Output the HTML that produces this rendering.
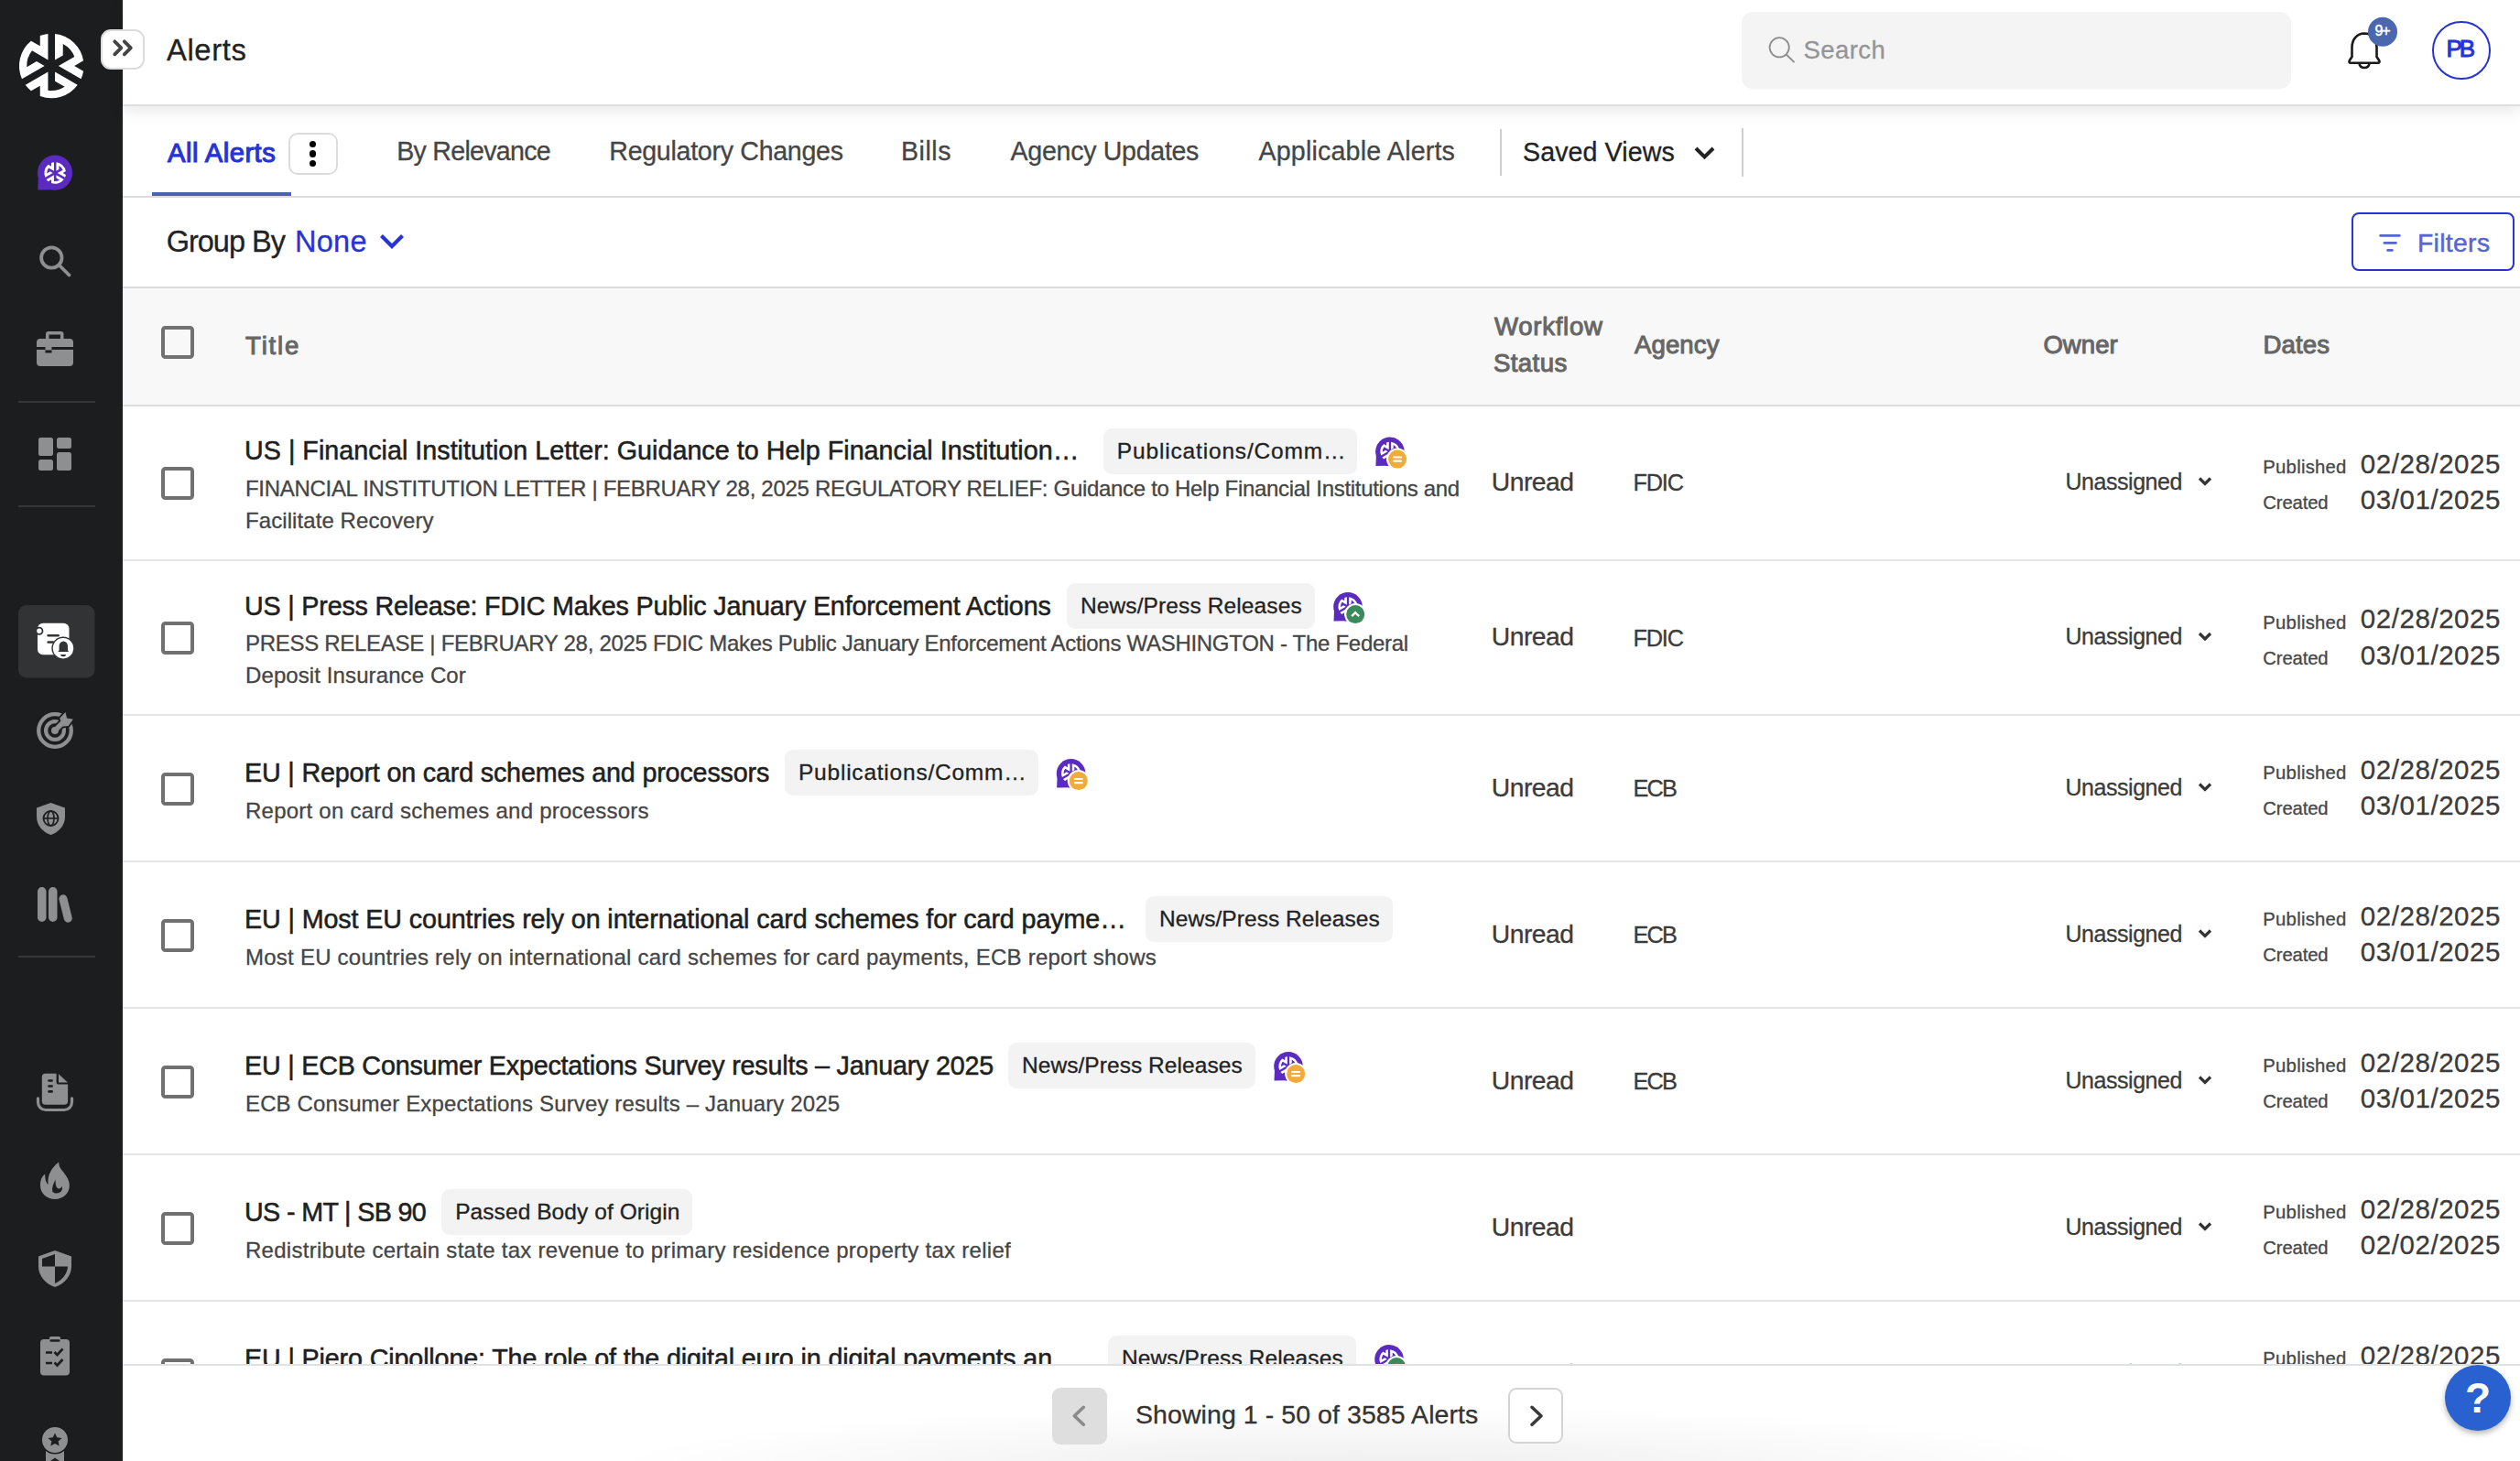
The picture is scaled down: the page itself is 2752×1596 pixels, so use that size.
<!DOCTYPE html>
<html><head><meta charset="utf-8"><style>
html,body{margin:0;padding:0;width:2752px;height:1596px;overflow:hidden;background:#fff;font-family:"Liberation Sans", sans-serif;}
#sb{position:absolute;left:0;top:0;width:134px;height:1596px;background:#1c1d1f;}
.tag{position:absolute;height:50px;background:#f3f3f3;border-radius:9px;}
.cb{position:absolute;width:28px;height:28px;border:4px solid #717171;border-radius:4.5px;}
.rowline{position:absolute;left:134px;width:2618px;height:2px;background:#e3e5e8;}
</style></head><body>
<div style="position:absolute;left:134px;top:0;width:2618px;height:114px;background:#fff;box-shadow:0 5px 16px rgba(0,0,0,0.095);border-bottom:2px solid #dedede;box-sizing:border-box;height:116px;z-index:1"></div>
<div style="position:absolute;left:134px;top:313px;width:2618px;height:129px;background:#f8f8f8;border-top:2px solid #dcdcdc;border-bottom:2px solid #dcdcdc;box-sizing:border-box;height:131px"></div>
<div style="position:absolute;left:134px;top:214px;width:2618px;height:2px;background:#dcdcdc"></div>
<div style="position:absolute;left:166px;top:210px;width:152px;height:4px;background:#4a62b0"></div>
<div style="position:absolute;left:1638px;top:141px;width:2px;height:51px;background:#cfcfcf"></div>
<div style="position:absolute;left:1902px;top:140px;width:2px;height:53px;background:#cfcfcf"></div>
<div style="position:absolute;left:314.6px;top:144.8px;width:54.5px;height:46.5px;border:2px solid #dcdcdc;border-radius:10px;box-sizing:border-box"></div>
<div style="position:absolute;left:338.2px;top:153.7px;width:7.2px;height:7.2px;border-radius:50%;background:#000"></div>
<div style="position:absolute;left:338.2px;top:164.4px;width:7.2px;height:7.2px;border-radius:50%;background:#000"></div>
<div style="position:absolute;left:338.2px;top:174.8px;width:7.2px;height:7.2px;border-radius:50%;background:#000"></div>
<div style="position:absolute;left:1902px;top:13px;width:600px;height:84px;background:#f4f4f4;border-radius:12px;z-index:2"></div>
<div style="position:absolute;left:2568px;top:232px;width:177.6px;height:63.6px;border:2px solid #2633d6;border-radius:8px;box-sizing:border-box"></div>
<div style="position:absolute;left:2656.3px;top:23.2px;width:63.4px;height:63.4px;border:2.2px solid #2633d6;border-radius:50%;box-sizing:border-box;z-index:2"></div>
<div style="position:absolute;left:134px;top:1490px;width:2618px;height:106px;background:radial-gradient(ellipse 820px 70px at 1346px 112px, rgba(0,0,0,0.065), rgba(0,0,0,0) 100%), #fff;border-top:2px solid #dfe1e4;box-sizing:border-box;z-index:3"></div>
<div style="position:absolute;left:1149px;top:1516px;width:59.6px;height:61.5px;background:#dedede;border-radius:9px;z-index:4"></div>
<div style="position:absolute;left:1647.4px;top:1516.3px;width:59.4px;height:61px;border:2px solid #d4d4d4;background:#fff;border-radius:9px;box-sizing:border-box;z-index:4"></div>
<div style="position:absolute;left:2670px;top:1490.6px;width:72px;height:72px;border-radius:50%;background:#2962d0;box-shadow:0 3px 6px rgba(0,0,0,0.3);z-index:5"></div>
<div class="tag" style="left:1204.8px;top:467.5px;width:277.1px"></div><div class="cb" style="left:176px;top:509.5px"></div><div class="rowline" style="top:611.0px"></div><div class="tag" style="left:1165.0px;top:637.0px;width:271.0px"></div><div class="cb" style="left:176px;top:679.0px"></div><div class="rowline" style="top:780.0px"></div><div class="tag" style="left:857.0px;top:819.0px;width:276.6px"></div><div class="cb" style="left:176px;top:843.5px"></div><div class="rowline" style="top:940.0px"></div><div class="tag" style="left:1251.0px;top:979.0px;width:270.0px"></div><div class="cb" style="left:176px;top:1003.5px"></div><div class="rowline" style="top:1100.0px"></div><div class="tag" style="left:1101.0px;top:1139.0px;width:270.0px"></div><div class="cb" style="left:176px;top:1163.5px"></div><div class="rowline" style="top:1260.0px"></div><div class="tag" style="left:482.2px;top:1299.0px;width:273.7px"></div><div class="cb" style="left:176px;top:1323.5px"></div><div class="rowline" style="top:1420.0px"></div><div class="tag" style="left:1210.0px;top:1459.0px;width:271.0px"></div><div class="cb" style="left:176px;top:1483.5px"></div><div class="rowline" style="top:1580.0px"></div>
<div class="cb" style="left:176px;top:356px"></div>
<div id="sb">
<svg width="134" height="1596" style="position:absolute;left:0;top:0">
<g transform="translate(56.25 72) scale(1.0)" fill="#fff"><path d="M-32.29 14.26 L-7.60 0.00 L-16.30 -5.02 L-26.98 1.14 A27.00 27.00 0 0 1 -21.25 -16.66 L-3.80 -6.58 L-3.80 -35.09 A35.30 35.30 0 0 0 -12.50 -33.01 L-12.50 -21.65 L-22.34 -27.33 A35.30 35.30 0 0 0 -32.29 14.26 Z"/><path d="M-32.29 14.26 L-7.60 0.00 L-16.30 -5.02 L-26.98 1.14 A27.00 27.00 0 0 1 -21.25 -16.66 L-3.80 -6.58 L-3.80 -35.09 A35.30 35.30 0 0 0 -12.50 -33.01 L-12.50 -21.65 L-22.34 -27.33 A35.30 35.30 0 0 0 -32.29 14.26 Z" transform="rotate(120)"/><path d="M-32.29 14.26 L-7.60 0.00 L-16.30 -5.02 L-26.98 1.14 A27.00 27.00 0 0 1 -21.25 -16.66 L-3.80 -6.58 L-3.80 -35.09 A35.30 35.30 0 0 0 -12.50 -33.01 L-12.50 -21.65 L-22.34 -27.33 A35.30 35.30 0 0 0 -32.29 14.26 Z" transform="rotate(240)"/></g>
<circle cx="60" cy="188.7" r="19.1" fill="#5b2bc0"/><path d="M41.86 193.47 L41.28 207.61 L58.09 207.23 Z" fill="#5b2bc0"/>
<g transform="translate(60.2 189) scale(0.335)" fill="#fff"><path d="M-32.29 14.26 L-7.60 0.00 L-16.30 -5.02 L-26.98 1.14 A27.00 27.00 0 0 1 -21.25 -16.66 L-3.80 -6.58 L-3.80 -35.09 A35.30 35.30 0 0 0 -12.50 -33.01 L-12.50 -21.65 L-22.34 -27.33 A35.30 35.30 0 0 0 -32.29 14.26 Z"/><path d="M-32.29 14.26 L-7.60 0.00 L-16.30 -5.02 L-26.98 1.14 A27.00 27.00 0 0 1 -21.25 -16.66 L-3.80 -6.58 L-3.80 -35.09 A35.30 35.30 0 0 0 -12.50 -33.01 L-12.50 -21.65 L-22.34 -27.33 A35.30 35.30 0 0 0 -32.29 14.26 Z" transform="rotate(120)"/><path d="M-32.29 14.26 L-7.60 0.00 L-16.30 -5.02 L-26.98 1.14 A27.00 27.00 0 0 1 -21.25 -16.66 L-3.80 -6.58 L-3.80 -35.09 A35.30 35.30 0 0 0 -12.50 -33.01 L-12.50 -21.65 L-22.34 -27.33 A35.30 35.30 0 0 0 -32.29 14.26 Z" transform="rotate(240)"/></g>
<!-- search -->
<circle cx="56.3" cy="281.5" r="11.2" stroke="#8e8f91" stroke-width="3.8" fill="none"/>
<path d="M64.5 289.5 L75.5 300.5" stroke="#8e8f91" stroke-width="3.8" stroke-linecap="round"/>
<!-- briefcase -->
<path d="M50 370 V365 a3 3 0 0 1 3 -3 h13.5 a3 3 0 0 1 3 3 V370 Z M53.5 365.5 h12.5 v4.5 h-12.5 Z" fill="#8e8f91" fill-rule="evenodd"/>
<path d="M44 370 h32 a4 4 0 0 1 4 4 v5 h-23.5 v3.5 h-7 v-3.5 H40 v-5 a4 4 0 0 1 4 -4 Z" fill="#8e8f91"/>
<path d="M40 382 h9.5 v3.5 h7 v-3.5 H80 v14 a4 4 0 0 1 -4 4 H44 a4 4 0 0 1 -4 -4 Z" fill="#8e8f91"/>
<rect x="20" y="438" width="84" height="2" fill="#34363a"/>
<!-- dashboard -->
<rect x="42" y="478" width="16" height="20" rx="2.5" fill="#8e8f91"/>
<rect x="62" y="478" width="16" height="12" rx="2.5" fill="#8e8f91"/>
<rect x="42" y="502" width="16" height="12" rx="2.5" fill="#8e8f91"/>
<rect x="62" y="494" width="16" height="20" rx="2.5" fill="#8e8f91"/>
<rect x="20" y="552" width="84" height="2" fill="#34363a"/>
<!-- active alerts -->
<rect x="20" y="661" width="83.5" height="79.5" rx="9" fill="#323335"/>
<rect x="41" y="680.7" width="34.5" height="34.5" rx="6" fill="#fff"/>
<circle cx="42.9" cy="689.3" r="3.6" fill="#fff" stroke="#323335" stroke-width="1.8"/>
<rect x="51.4" y="692.9" width="13.5" height="2.5" rx="1.2" fill="#323335"/>
<rect x="51.4" y="700.3" width="8" height="2.5" rx="1.2" fill="#323335"/>
<circle cx="69" cy="708.2" r="12.6" fill="#323335"/>
<circle cx="69" cy="708.2" r="11.2" fill="#fff"/>
<path d="M63.3 712 L64.6 710.2 V705.6 a4.7 5.2 0 0 1 9.4 0 V710.2 L75.1 712 Z" fill="#323335"/>
<path d="M66.2 715 h5.8 a2.9 2.2 0 0 1 -5.8 0 Z" fill="#323335"/>
<!-- target -->
<circle cx="60" cy="798" r="17.8" stroke="#8e8f91" stroke-width="4.3" fill="none"/>
<circle cx="60" cy="798" r="9.9" stroke="#8e8f91" stroke-width="4.2" fill="none"/>
<path d="M60 798 L72 786" stroke="#1c1d1f" stroke-width="9.5" stroke-linecap="round"/>
<path d="M65.3 784.4 L71.5 778 L73 784.4 L79.9 785.8 L74.6 793 L68.2 793.4 Z" fill="#1c1d1f" stroke="#1c1d1f" stroke-width="3.5" stroke-linejoin="round"/>
<path d="M60 798 L70 788" stroke="#8e8f91" stroke-width="5.4" stroke-linecap="round"/>
<path d="M65.3 784.4 L71.5 778 L73 784.4 L79.9 785.8 L74.6 793 L68.2 793.4 Z" fill="#8e8f91"/>
<circle cx="60" cy="798" r="4" fill="#8e8f91"/>
<!-- shield globe -->
<path d="M55.5 877 L71 882.5 v9.5 c0 9.5 -6.5 17 -15.5 20 c-9 -3 -15.5 -10.5 -15.5 -20 v-9.5 Z" fill="#8e8f91"/>
<circle cx="55.5" cy="894" r="8" stroke="#1c1d1f" stroke-width="1.8" fill="none"/>
<ellipse cx="55.5" cy="894" rx="3.5" ry="8" stroke="#1c1d1f" stroke-width="1.6" fill="none"/>
<path d="M47.5 894 h16" stroke="#1c1d1f" stroke-width="1.6"/>
<!-- books -->
<rect x="41" y="969" width="9.5" height="38" rx="4.75" fill="#8e8f91"/>
<rect x="53" y="969" width="9.5" height="38" rx="4.75" fill="#8e8f91"/>
<rect x="67" y="977" width="9" height="31" rx="4.5" fill="#8e8f91" transform="rotate(-14 71.5 992)"/>
<rect x="20" y="1044" width="84" height="2" fill="#34363a"/>
<!-- doc tray -->
<path d="M49.5 1172.7 H61.6 V1182 a2.6 2.6 0 0 0 2.6 2.6 H74.1 V1203.1 a3.7 3.7 0 0 1 -3.7 3.7 H49.5 a3.7 3.7 0 0 1 -3.7 -3.7 V1176.4 a3.7 3.7 0 0 1 3.7 -3.7 Z" fill="#8e8f91"/>
<path d="M64 1173.3 L74 1182.6 H64 Z" fill="#8e8f91"/>
<rect x="52.2" y="1179.2" width="5.7" height="2.6" rx="1.3" fill="#1c1d1f"/><rect x="52.2" y="1185.2" width="5.7" height="2.6" rx="1.3" fill="#1c1d1f"/><rect x="52.2" y="1191.1" width="5.7" height="2.6" rx="1.3" fill="#1c1d1f"/>
<path d="M41.5 1199.8 v4.2 a8.5 8.5 0 0 0 8.5 8.5 h20 a8.5 8.5 0 0 0 8.5 -8.5 v-4.2" stroke="#8e8f91" stroke-width="3.2" fill="none" stroke-linecap="round"/>
<!-- flame -->
<path d="M64.3 1269.2 C63 1278 75.9 1283 75.9 1295 C75.9 1303.5 68.8 1310 60 1310 C51.2 1310 44 1303.5 44 1295 C44 1289 46 1285 49.2 1282.6 C49 1287 50 1292 52.6 1294.2 C51.5 1284 56 1276 64.3 1269.2 Z" fill="#8e8f91"/>
<path d="M60.8 1288.4 C58 1293 56.5 1297.5 57.3 1301.7 C59.5 1303.8 62.5 1304 65 1302.8 C67.8 1301.2 68.6 1298.3 67.6 1296 C66.2 1298.8 63.6 1299.3 62.1 1297.3 C60.6 1295 60.4 1291.5 60.8 1288.4 Z" fill="#1c1d1f"/>
<!-- shield half -->
<path d="M60 1366 L78 1372.5 v11 c0 10 -7.5 19 -18 22.5 c-10.5 -3.5 -18 -12.5 -18 -22.5 v-11 Z" fill="#8e8f91"/>
<path d="M60 1370 L46 1375 v8.5 h14 Z" fill="#1c1d1f"/>
<path d="M60 1383.5 h14 c-0.5 8 -6 15 -14 18.5 Z" fill="#1c1d1f"/>
<path d="M60 1370 L46 1375 v8.5 c0 0.3 0 0.5 0 0.8" fill="none"/>
<!-- clipboard -->
<path d="M48 1463 h6 v-1.5 a1.5 1.5 0 0 1 1.5 -1.5 h9 a1.5 1.5 0 0 1 1.5 1.5 v1.5 h6 a4 4 0 0 1 4 4 v31.6 a4 4 0 0 1 -4 4 h-24 a4 4 0 0 1 -4 -4 v-31.6 a4 4 0 0 1 4 -4 Z" fill="#8e8f91"/>
<rect x="54.5" y="1463.2" width="11" height="2.6" rx="1" fill="#1c1d1f"/>
<path d="M50 1477.5 h7 M50 1489 h7" stroke="#1c1d1f" stroke-width="2.6"/>
<path d="M59.5 1477 l3 3 l6 -6.5 M59.5 1488.5 l3 3 l6 -6.5" stroke="#1c1d1f" stroke-width="2.6" fill="none"/>
<!-- award -->
<path d="M50 1584 h20 v12 h-20 Z" fill="#8e8f91"/>
<path d="M55 1596 L60 1592.5 L65 1596 Z" fill="#1c1d1f"/>
<circle cx="60" cy="1573" r="14.8" fill="#8e8f91" stroke="#1c1d1f" stroke-width="1.6"/>
<path d="M60 1565.5 l2.3 4.8 l5.2 0.6 l-3.9 3.6 l1.1 5.1 l-4.7 -2.6 l-4.7 2.6 l1.1 -5.1 l-3.9 -3.6 l5.2 -0.6 Z" fill="#1c1d1f"/>
</svg></div>
<div style="position:absolute;left:110px;top:32px;width:48px;height:44px;background:#fff;border:2px solid #dcdcdc;border-radius:11px;box-sizing:border-box;z-index:6"></div>
<svg width="2752" height="1596" style="position:absolute;left:0;top:0;z-index:7;pointer-events:none">
<path d="M125.3 45.3 L132.3 52.3 L125.3 59.3 M135.8 45.3 L142.8 52.3 L135.8 59.3" stroke="#444" stroke-width="3.8" fill="none" stroke-linecap="round" stroke-linejoin="round"/>
<circle cx="1943.2" cy="51.8" r="10.6" stroke="#8d8d8d" stroke-width="1.8" fill="none"/>
<path d="M1951 59.8 L1959 67.6" stroke="#8d8d8d" stroke-width="1.9" stroke-linecap="round"/>
<path d="M2582 36.5 c-8 0 -13.5 6.5 -13.5 15.5 v10 l-2.8 4.3 c-0.7 1.2 0.1 2.4 1.4 2.4 h29.8 c1.3 0 2.1 -1.2 1.4 -2.4 l-2.8 -4.3 v-10 c0 -9 -5.5 -15.5 -13.5 -15.5 Z" stroke="#1a1a1a" stroke-width="2.6" fill="#fff"/>
<path d="M2576.5 69.5 a5.6 5.6 0 0 0 11 0" stroke="#1a1a1a" stroke-width="2.6" fill="none"/>
<circle cx="2602" cy="34.8" r="16" fill="#4a67b0" stroke="#fff" stroke-width="0"/>
<path d="M416.5 257.5 L428 269 L439.5 257.5" stroke="#2633d6" stroke-width="4.2" fill="none"/>
<path d="M1852 162 L1861.5 171.5 L1871 162" stroke="#222" stroke-width="4" fill="none"/>
<path d="M2599.6 257.4 h20.8 M2603.9 265.4 h12.6 M2607.6 273.4 h4.8" stroke="#5566d6" stroke-width="2.8" stroke-linecap="round"/>
<path d="M1183.3 1537.3 L1173.3 1546.8 L1183.3 1556.2" stroke="#8a8a8a" stroke-width="3.6" fill="none" stroke-linecap="round" stroke-linejoin="round"/>
<path d="M1673 1537.3 L1683 1546.8 L1673 1556.2" stroke="#3a3a3a" stroke-width="3.6" fill="none" stroke-linecap="round" stroke-linejoin="round"/>
</svg>
<svg width="2752" height="1596" style="position:absolute;left:0;top:0;z-index:1">
<circle cx="1517.9" cy="493.3" r="15.8" fill="#5b2bc0"/><path d="M1502.89 497.25 L1502.42 508.94 L1516.32 508.63 Z" fill="#5b2bc0"/><g transform="translate(1517.9 493.3) scale(0.3)" fill="#fff"><path d="M-32.29 14.26 L-7.60 0.00 L-16.30 -5.02 L-26.98 1.14 A27.00 27.00 0 0 1 -21.25 -16.66 L-3.80 -6.58 L-3.80 -35.09 A35.30 35.30 0 0 0 -12.50 -33.01 L-12.50 -21.65 L-22.34 -27.33 A35.30 35.30 0 0 0 -32.29 14.26 Z"/><path d="M-32.29 14.26 L-7.60 0.00 L-16.30 -5.02 L-26.98 1.14 A27.00 27.00 0 0 1 -21.25 -16.66 L-3.80 -6.58 L-3.80 -35.09 A35.30 35.30 0 0 0 -12.50 -33.01 L-12.50 -21.65 L-22.34 -27.33 A35.30 35.30 0 0 0 -32.29 14.26 Z" transform="rotate(120)"/><path d="M-32.29 14.26 L-7.60 0.00 L-16.30 -5.02 L-26.98 1.14 A27.00 27.00 0 0 1 -21.25 -16.66 L-3.80 -6.58 L-3.80 -35.09 A35.30 35.30 0 0 0 -12.50 -33.01 L-12.50 -21.65 L-22.34 -27.33 A35.30 35.30 0 0 0 -32.29 14.26 Z" transform="rotate(240)"/></g><circle cx="1526.1000000000001" cy="501.6" r="12" fill="#fff"/><circle cx="1526.1000000000001" cy="501.6" r="10" fill="#f0ab3a"/><rect x="1521.1000000000001" y="498.40000000000003" width="10" height="2.2" rx="1" fill="#fff"/><rect x="1521.1000000000001" y="502.6" width="10" height="2.2" rx="1" fill="#fff"/><path d="M2402 522.5 L2408 528.5 L2414 522.5" stroke="#333" stroke-width="3.2" fill="none"/><circle cx="1472" cy="662.8" r="15.8" fill="#5b2bc0"/><path d="M1456.99 666.75 L1456.52 678.44 L1470.42 678.13 Z" fill="#5b2bc0"/><g transform="translate(1472 662.8) scale(0.3)" fill="#fff"><path d="M-32.29 14.26 L-7.60 0.00 L-16.30 -5.02 L-26.98 1.14 A27.00 27.00 0 0 1 -21.25 -16.66 L-3.80 -6.58 L-3.80 -35.09 A35.30 35.30 0 0 0 -12.50 -33.01 L-12.50 -21.65 L-22.34 -27.33 A35.30 35.30 0 0 0 -32.29 14.26 Z"/><path d="M-32.29 14.26 L-7.60 0.00 L-16.30 -5.02 L-26.98 1.14 A27.00 27.00 0 0 1 -21.25 -16.66 L-3.80 -6.58 L-3.80 -35.09 A35.30 35.30 0 0 0 -12.50 -33.01 L-12.50 -21.65 L-22.34 -27.33 A35.30 35.30 0 0 0 -32.29 14.26 Z" transform="rotate(120)"/><path d="M-32.29 14.26 L-7.60 0.00 L-16.30 -5.02 L-26.98 1.14 A27.00 27.00 0 0 1 -21.25 -16.66 L-3.80 -6.58 L-3.80 -35.09 A35.30 35.30 0 0 0 -12.50 -33.01 L-12.50 -21.65 L-22.34 -27.33 A35.30 35.30 0 0 0 -32.29 14.26 Z" transform="rotate(240)"/></g><circle cx="1480.2" cy="671.0999999999999" r="12" fill="#fff"/><circle cx="1480.2" cy="671.0999999999999" r="10" fill="#3b8a5c"/><path d="M1476.2 673.0999999999999 L1480.2 669.0999999999999 L1484.2 673.0999999999999" stroke="#fff" stroke-width="2.2" fill="none"/><path d="M2402 692.0 L2408 698.0 L2414 692.0" stroke="#333" stroke-width="3.2" fill="none"/><circle cx="1169.6" cy="844.8" r="15.8" fill="#5b2bc0"/><path d="M1154.59 848.75 L1154.12 860.44 L1168.02 860.13 Z" fill="#5b2bc0"/><g transform="translate(1169.6 844.8) scale(0.3)" fill="#fff"><path d="M-32.29 14.26 L-7.60 0.00 L-16.30 -5.02 L-26.98 1.14 A27.00 27.00 0 0 1 -21.25 -16.66 L-3.80 -6.58 L-3.80 -35.09 A35.30 35.30 0 0 0 -12.50 -33.01 L-12.50 -21.65 L-22.34 -27.33 A35.30 35.30 0 0 0 -32.29 14.26 Z"/><path d="M-32.29 14.26 L-7.60 0.00 L-16.30 -5.02 L-26.98 1.14 A27.00 27.00 0 0 1 -21.25 -16.66 L-3.80 -6.58 L-3.80 -35.09 A35.30 35.30 0 0 0 -12.50 -33.01 L-12.50 -21.65 L-22.34 -27.33 A35.30 35.30 0 0 0 -32.29 14.26 Z" transform="rotate(120)"/><path d="M-32.29 14.26 L-7.60 0.00 L-16.30 -5.02 L-26.98 1.14 A27.00 27.00 0 0 1 -21.25 -16.66 L-3.80 -6.58 L-3.80 -35.09 A35.30 35.30 0 0 0 -12.50 -33.01 L-12.50 -21.65 L-22.34 -27.33 A35.30 35.30 0 0 0 -32.29 14.26 Z" transform="rotate(240)"/></g><circle cx="1177.8" cy="853.0999999999999" r="12" fill="#fff"/><circle cx="1177.8" cy="853.0999999999999" r="10" fill="#f0ab3a"/><rect x="1172.8" y="849.8999999999999" width="10" height="2.2" rx="1" fill="#fff"/><rect x="1172.8" y="854.0999999999999" width="10" height="2.2" rx="1" fill="#fff"/><path d="M2402 856.5 L2408 862.5 L2414 856.5" stroke="#333" stroke-width="3.2" fill="none"/><path d="M2402 1016.5 L2408 1022.5 L2414 1016.5" stroke="#333" stroke-width="3.2" fill="none"/><circle cx="1407" cy="1164.8" r="15.8" fill="#5b2bc0"/><path d="M1391.99 1168.75 L1391.52 1180.44 L1405.42 1180.13 Z" fill="#5b2bc0"/><g transform="translate(1407 1164.8) scale(0.3)" fill="#fff"><path d="M-32.29 14.26 L-7.60 0.00 L-16.30 -5.02 L-26.98 1.14 A27.00 27.00 0 0 1 -21.25 -16.66 L-3.80 -6.58 L-3.80 -35.09 A35.30 35.30 0 0 0 -12.50 -33.01 L-12.50 -21.65 L-22.34 -27.33 A35.30 35.30 0 0 0 -32.29 14.26 Z"/><path d="M-32.29 14.26 L-7.60 0.00 L-16.30 -5.02 L-26.98 1.14 A27.00 27.00 0 0 1 -21.25 -16.66 L-3.80 -6.58 L-3.80 -35.09 A35.30 35.30 0 0 0 -12.50 -33.01 L-12.50 -21.65 L-22.34 -27.33 A35.30 35.30 0 0 0 -32.29 14.26 Z" transform="rotate(120)"/><path d="M-32.29 14.26 L-7.60 0.00 L-16.30 -5.02 L-26.98 1.14 A27.00 27.00 0 0 1 -21.25 -16.66 L-3.80 -6.58 L-3.80 -35.09 A35.30 35.30 0 0 0 -12.50 -33.01 L-12.50 -21.65 L-22.34 -27.33 A35.30 35.30 0 0 0 -32.29 14.26 Z" transform="rotate(240)"/></g><circle cx="1415.2" cy="1173.1" r="12" fill="#fff"/><circle cx="1415.2" cy="1173.1" r="10" fill="#f0ab3a"/><rect x="1410.2" y="1169.8999999999999" width="10" height="2.2" rx="1" fill="#fff"/><rect x="1410.2" y="1174.1" width="10" height="2.2" rx="1" fill="#fff"/><path d="M2402 1176.5 L2408 1182.5 L2414 1176.5" stroke="#333" stroke-width="3.2" fill="none"/><path d="M2402 1336.5 L2408 1342.5 L2414 1336.5" stroke="#333" stroke-width="3.2" fill="none"/><circle cx="1517" cy="1484.8" r="15.8" fill="#5b2bc0"/><path d="M1501.99 1488.75 L1501.52 1500.44 L1515.42 1500.13 Z" fill="#5b2bc0"/><g transform="translate(1517 1484.8) scale(0.3)" fill="#fff"><path d="M-32.29 14.26 L-7.60 0.00 L-16.30 -5.02 L-26.98 1.14 A27.00 27.00 0 0 1 -21.25 -16.66 L-3.80 -6.58 L-3.80 -35.09 A35.30 35.30 0 0 0 -12.50 -33.01 L-12.50 -21.65 L-22.34 -27.33 A35.30 35.30 0 0 0 -32.29 14.26 Z"/><path d="M-32.29 14.26 L-7.60 0.00 L-16.30 -5.02 L-26.98 1.14 A27.00 27.00 0 0 1 -21.25 -16.66 L-3.80 -6.58 L-3.80 -35.09 A35.30 35.30 0 0 0 -12.50 -33.01 L-12.50 -21.65 L-22.34 -27.33 A35.30 35.30 0 0 0 -32.29 14.26 Z" transform="rotate(120)"/><path d="M-32.29 14.26 L-7.60 0.00 L-16.30 -5.02 L-26.98 1.14 A27.00 27.00 0 0 1 -21.25 -16.66 L-3.80 -6.58 L-3.80 -35.09 A35.30 35.30 0 0 0 -12.50 -33.01 L-12.50 -21.65 L-22.34 -27.33 A35.30 35.30 0 0 0 -32.29 14.26 Z" transform="rotate(240)"/></g><circle cx="1525.2" cy="1493.1" r="12" fill="#fff"/><circle cx="1525.2" cy="1493.1" r="10" fill="#3b8a5c"/><path d="M1521.2 1495.1 L1525.2 1491.1 L1529.2 1495.1" stroke="#fff" stroke-width="2.2" fill="none"/><path d="M2402 1496.5 L2408 1502.5 L2414 1496.5" stroke="#333" stroke-width="3.2" fill="none"/>
</svg>
<div style="position:absolute;left:0;top:0;width:2752px;height:1596px;z-index:2"><span style="position:absolute;left:267.00px;top:476.02px;font-size:28.7px;line-height:32.063px;color:#1f1f1f;white-space:nowrap;letter-spacing:0.019px;-webkit-text-stroke:0.55px #1f1f1f;">US | Financial Institution Letter: Guidance to Help Financial Institution…</span><span style="position:absolute;left:268.00px;top:520.77px;font-size:24px;line-height:26.812px;color:#454545;white-space:nowrap;letter-spacing:-0.300px;-webkit-text-stroke:0.3px #454545;">FINANCIAL INSTITUTION LETTER | FEBRUARY 28, 2025 REGULATORY RELIEF: Guidance to Help Financial Institutions and</span><span style="position:absolute;left:268.00px;top:555.77px;font-size:24px;line-height:26.812px;color:#454545;white-space:nowrap;letter-spacing:0.083px;-webkit-text-stroke:0.3px #454545;">Facilitate Recovery</span><span style="position:absolute;left:1219.80px;top:478.52px;font-size:24.5px;line-height:27.371px;color:#222;white-space:nowrap;letter-spacing:0.835px;-webkit-text-stroke:0.3px #222;">Publications/Comm…</span><span style="position:absolute;left:1628.80px;top:510.88px;font-size:28.3px;line-height:31.616px;color:#3b3b3b;white-space:nowrap;letter-spacing:-0.520px;-webkit-text-stroke:0.3px #3b3b3b;">Unread</span><span style="position:absolute;left:1783.50px;top:513.10px;font-size:25.3px;line-height:28.265px;color:#3b3b3b;white-space:nowrap;letter-spacing:-1.200px;-webkit-text-stroke:0.3px #3b3b3b;">FDIC</span><span style="position:absolute;left:2255.40px;top:512.67px;font-size:25px;line-height:27.930px;color:#3b3b3b;white-space:nowrap;letter-spacing:-0.444px;-webkit-text-stroke:0.3px #3b3b3b;">Unassigned</span><span style="position:absolute;left:2471.30px;top:499.02px;font-size:20.3px;line-height:22.679px;color:#474747;white-space:nowrap;letter-spacing:0.250px;-webkit-text-stroke:0.3px #474747;">Published</span><span style="position:absolute;left:2577.80px;top:490.69px;font-size:29.5px;line-height:32.957px;color:#3b3b3b;white-space:nowrap;letter-spacing:0.556px;-webkit-text-stroke:0.3px #3b3b3b;">02/28/2025</span><span style="position:absolute;left:2471.30px;top:538.42px;font-size:20.3px;line-height:22.679px;color:#474747;white-space:nowrap;letter-spacing:-0.133px;-webkit-text-stroke:0.3px #474747;">Created</span><span style="position:absolute;left:2577.80px;top:530.09px;font-size:29.5px;line-height:32.957px;color:#3b3b3b;white-space:nowrap;letter-spacing:0.556px;-webkit-text-stroke:0.3px #3b3b3b;">03/01/2025</span><span style="position:absolute;left:267.00px;top:645.52px;font-size:28.7px;line-height:32.063px;color:#1f1f1f;white-space:nowrap;letter-spacing:-0.181px;-webkit-text-stroke:0.55px #1f1f1f;">US | Press Release: FDIC Makes Public January Enforcement Actions</span><span style="position:absolute;left:268.00px;top:690.27px;font-size:24px;line-height:26.812px;color:#454545;white-space:nowrap;letter-spacing:-0.291px;-webkit-text-stroke:0.3px #454545;">PRESS RELEASE | FEBRUARY 28, 2025 FDIC Makes Public January Enforcement Actions WASHINGTON - The Federal</span><span style="position:absolute;left:268.00px;top:725.27px;font-size:24px;line-height:26.812px;color:#454545;white-space:nowrap;letter-spacing:0.100px;-webkit-text-stroke:0.3px #454545;">Deposit Insurance Cor</span><span style="position:absolute;left:1180.00px;top:648.02px;font-size:24.5px;line-height:27.371px;color:#222;white-space:nowrap;letter-spacing:0.111px;-webkit-text-stroke:0.3px #222;">News/Press Releases</span><span style="position:absolute;left:1628.80px;top:680.38px;font-size:28.3px;line-height:31.616px;color:#3b3b3b;white-space:nowrap;letter-spacing:-0.520px;-webkit-text-stroke:0.3px #3b3b3b;">Unread</span><span style="position:absolute;left:1783.50px;top:682.60px;font-size:25.3px;line-height:28.265px;color:#3b3b3b;white-space:nowrap;letter-spacing:-1.200px;-webkit-text-stroke:0.3px #3b3b3b;">FDIC</span><span style="position:absolute;left:2255.40px;top:682.17px;font-size:25px;line-height:27.930px;color:#3b3b3b;white-space:nowrap;letter-spacing:-0.444px;-webkit-text-stroke:0.3px #3b3b3b;">Unassigned</span><span style="position:absolute;left:2471.30px;top:668.52px;font-size:20.3px;line-height:22.679px;color:#474747;white-space:nowrap;letter-spacing:0.250px;-webkit-text-stroke:0.3px #474747;">Published</span><span style="position:absolute;left:2577.80px;top:660.19px;font-size:29.5px;line-height:32.957px;color:#3b3b3b;white-space:nowrap;letter-spacing:0.556px;-webkit-text-stroke:0.3px #3b3b3b;">02/28/2025</span><span style="position:absolute;left:2471.30px;top:707.92px;font-size:20.3px;line-height:22.679px;color:#474747;white-space:nowrap;letter-spacing:-0.133px;-webkit-text-stroke:0.3px #474747;">Created</span><span style="position:absolute;left:2577.80px;top:699.59px;font-size:29.5px;line-height:32.957px;color:#3b3b3b;white-space:nowrap;letter-spacing:0.556px;-webkit-text-stroke:0.3px #3b3b3b;">03/01/2025</span><span style="position:absolute;left:267.00px;top:827.52px;font-size:28.7px;line-height:32.063px;color:#1f1f1f;white-space:nowrap;letter-spacing:-0.161px;-webkit-text-stroke:0.55px #1f1f1f;">EU | Report on card schemes and processors</span><span style="position:absolute;left:268.00px;top:872.77px;font-size:24px;line-height:26.812px;color:#454545;white-space:nowrap;letter-spacing:0.233px;-webkit-text-stroke:0.3px #454545;">Report on card schemes and processors</span><span style="position:absolute;left:872.00px;top:830.02px;font-size:24.5px;line-height:27.371px;color:#222;white-space:nowrap;letter-spacing:0.776px;-webkit-text-stroke:0.3px #222;">Publications/Comm…</span><span style="position:absolute;left:1628.80px;top:844.88px;font-size:28.3px;line-height:31.616px;color:#3b3b3b;white-space:nowrap;letter-spacing:-0.520px;-webkit-text-stroke:0.3px #3b3b3b;">Unread</span><span style="position:absolute;left:1783.50px;top:847.10px;font-size:25.3px;line-height:28.265px;color:#3b3b3b;white-space:nowrap;letter-spacing:-1.800px;-webkit-text-stroke:0.3px #3b3b3b;">ECB</span><span style="position:absolute;left:2255.40px;top:846.67px;font-size:25px;line-height:27.930px;color:#3b3b3b;white-space:nowrap;letter-spacing:-0.444px;-webkit-text-stroke:0.3px #3b3b3b;">Unassigned</span><span style="position:absolute;left:2471.30px;top:833.02px;font-size:20.3px;line-height:22.679px;color:#474747;white-space:nowrap;letter-spacing:0.250px;-webkit-text-stroke:0.3px #474747;">Published</span><span style="position:absolute;left:2577.80px;top:824.69px;font-size:29.5px;line-height:32.957px;color:#3b3b3b;white-space:nowrap;letter-spacing:0.556px;-webkit-text-stroke:0.3px #3b3b3b;">02/28/2025</span><span style="position:absolute;left:2471.30px;top:872.42px;font-size:20.3px;line-height:22.679px;color:#474747;white-space:nowrap;letter-spacing:-0.133px;-webkit-text-stroke:0.3px #474747;">Created</span><span style="position:absolute;left:2577.80px;top:864.09px;font-size:29.5px;line-height:32.957px;color:#3b3b3b;white-space:nowrap;letter-spacing:0.556px;-webkit-text-stroke:0.3px #3b3b3b;">03/01/2025</span><span style="position:absolute;left:267.00px;top:987.52px;font-size:28.7px;line-height:32.063px;color:#1f1f1f;white-space:nowrap;letter-spacing:-0.106px;-webkit-text-stroke:0.55px #1f1f1f;">EU | Most EU countries rely on international card schemes for card payme…</span><span style="position:absolute;left:268.00px;top:1032.77px;font-size:24px;line-height:26.812px;color:#454545;white-space:nowrap;letter-spacing:0.241px;-webkit-text-stroke:0.3px #454545;">Most EU countries rely on international card schemes for card payments, ECB report shows</span><span style="position:absolute;left:1266.00px;top:990.02px;font-size:24.5px;line-height:27.371px;color:#222;white-space:nowrap;letter-spacing:0.056px;-webkit-text-stroke:0.3px #222;">News/Press Releases</span><span style="position:absolute;left:1628.80px;top:1004.88px;font-size:28.3px;line-height:31.616px;color:#3b3b3b;white-space:nowrap;letter-spacing:-0.520px;-webkit-text-stroke:0.3px #3b3b3b;">Unread</span><span style="position:absolute;left:1783.50px;top:1007.10px;font-size:25.3px;line-height:28.265px;color:#3b3b3b;white-space:nowrap;letter-spacing:-1.800px;-webkit-text-stroke:0.3px #3b3b3b;">ECB</span><span style="position:absolute;left:2255.40px;top:1006.67px;font-size:25px;line-height:27.930px;color:#3b3b3b;white-space:nowrap;letter-spacing:-0.444px;-webkit-text-stroke:0.3px #3b3b3b;">Unassigned</span><span style="position:absolute;left:2471.30px;top:993.02px;font-size:20.3px;line-height:22.679px;color:#474747;white-space:nowrap;letter-spacing:0.250px;-webkit-text-stroke:0.3px #474747;">Published</span><span style="position:absolute;left:2577.80px;top:984.69px;font-size:29.5px;line-height:32.957px;color:#3b3b3b;white-space:nowrap;letter-spacing:0.556px;-webkit-text-stroke:0.3px #3b3b3b;">02/28/2025</span><span style="position:absolute;left:2471.30px;top:1032.42px;font-size:20.3px;line-height:22.679px;color:#474747;white-space:nowrap;letter-spacing:-0.133px;-webkit-text-stroke:0.3px #474747;">Created</span><span style="position:absolute;left:2577.80px;top:1024.09px;font-size:29.5px;line-height:32.957px;color:#3b3b3b;white-space:nowrap;letter-spacing:0.556px;-webkit-text-stroke:0.3px #3b3b3b;">03/01/2025</span><span style="position:absolute;left:267.00px;top:1147.52px;font-size:28.7px;line-height:32.063px;color:#1f1f1f;white-space:nowrap;letter-spacing:-0.203px;-webkit-text-stroke:0.55px #1f1f1f;">EU | ECB Consumer Expectations Survey results – January 2025</span><span style="position:absolute;left:268.00px;top:1192.77px;font-size:24px;line-height:26.812px;color:#454545;white-space:nowrap;letter-spacing:0.137px;-webkit-text-stroke:0.3px #454545;">ECB Consumer Expectations Survey results – January 2025</span><span style="position:absolute;left:1116.00px;top:1150.02px;font-size:24.5px;line-height:27.371px;color:#222;white-space:nowrap;letter-spacing:0.056px;-webkit-text-stroke:0.3px #222;">News/Press Releases</span><span style="position:absolute;left:1628.80px;top:1164.88px;font-size:28.3px;line-height:31.616px;color:#3b3b3b;white-space:nowrap;letter-spacing:-0.520px;-webkit-text-stroke:0.3px #3b3b3b;">Unread</span><span style="position:absolute;left:1783.50px;top:1167.10px;font-size:25.3px;line-height:28.265px;color:#3b3b3b;white-space:nowrap;letter-spacing:-1.800px;-webkit-text-stroke:0.3px #3b3b3b;">ECB</span><span style="position:absolute;left:2255.40px;top:1166.67px;font-size:25px;line-height:27.930px;color:#3b3b3b;white-space:nowrap;letter-spacing:-0.444px;-webkit-text-stroke:0.3px #3b3b3b;">Unassigned</span><span style="position:absolute;left:2471.30px;top:1153.02px;font-size:20.3px;line-height:22.679px;color:#474747;white-space:nowrap;letter-spacing:0.250px;-webkit-text-stroke:0.3px #474747;">Published</span><span style="position:absolute;left:2577.80px;top:1144.69px;font-size:29.5px;line-height:32.957px;color:#3b3b3b;white-space:nowrap;letter-spacing:0.556px;-webkit-text-stroke:0.3px #3b3b3b;">02/28/2025</span><span style="position:absolute;left:2471.30px;top:1192.42px;font-size:20.3px;line-height:22.679px;color:#474747;white-space:nowrap;letter-spacing:-0.133px;-webkit-text-stroke:0.3px #474747;">Created</span><span style="position:absolute;left:2577.80px;top:1184.09px;font-size:29.5px;line-height:32.957px;color:#3b3b3b;white-space:nowrap;letter-spacing:0.556px;-webkit-text-stroke:0.3px #3b3b3b;">03/01/2025</span><span style="position:absolute;left:267.00px;top:1307.52px;font-size:28.7px;line-height:32.063px;color:#1f1f1f;white-space:nowrap;letter-spacing:-0.643px;-webkit-text-stroke:0.55px #1f1f1f;">US - MT | SB 90</span><span style="position:absolute;left:268.00px;top:1352.77px;font-size:24px;line-height:26.812px;color:#454545;white-space:nowrap;letter-spacing:0.282px;-webkit-text-stroke:0.3px #454545;">Redistribute certain state tax revenue to primary residence property tax relief</span><span style="position:absolute;left:497.20px;top:1310.02px;font-size:24.5px;line-height:27.371px;color:#222;white-space:nowrap;letter-spacing:0.070px;-webkit-text-stroke:0.3px #222;">Passed Body of Origin</span><span style="position:absolute;left:1628.80px;top:1324.88px;font-size:28.3px;line-height:31.616px;color:#3b3b3b;white-space:nowrap;letter-spacing:-0.520px;-webkit-text-stroke:0.3px #3b3b3b;">Unread</span><span style="position:absolute;left:2255.40px;top:1326.67px;font-size:25px;line-height:27.930px;color:#3b3b3b;white-space:nowrap;letter-spacing:-0.444px;-webkit-text-stroke:0.3px #3b3b3b;">Unassigned</span><span style="position:absolute;left:2471.30px;top:1313.02px;font-size:20.3px;line-height:22.679px;color:#474747;white-space:nowrap;letter-spacing:0.250px;-webkit-text-stroke:0.3px #474747;">Published</span><span style="position:absolute;left:2577.80px;top:1304.69px;font-size:29.5px;line-height:32.957px;color:#3b3b3b;white-space:nowrap;letter-spacing:0.556px;-webkit-text-stroke:0.3px #3b3b3b;">02/28/2025</span><span style="position:absolute;left:2471.30px;top:1352.42px;font-size:20.3px;line-height:22.679px;color:#474747;white-space:nowrap;letter-spacing:-0.133px;-webkit-text-stroke:0.3px #474747;">Created</span><span style="position:absolute;left:2577.80px;top:1344.09px;font-size:29.5px;line-height:32.957px;color:#3b3b3b;white-space:nowrap;letter-spacing:0.556px;-webkit-text-stroke:0.3px #3b3b3b;">02/02/2025</span><span style="position:absolute;left:267.00px;top:1467.52px;font-size:28.7px;line-height:32.063px;color:#1f1f1f;white-space:nowrap;letter-spacing:-0.137px;-webkit-text-stroke:0.55px #1f1f1f;">EU | Piero Cipollone: The role of the digital euro in digital payments an…</span><span style="position:absolute;left:268.00px;top:1512.77px;font-size:24px;line-height:26.812px;color:#454545;white-space:nowrap;-webkit-text-stroke:0.3px #454545;">Digital euro</span><span style="position:absolute;left:1225.00px;top:1470.02px;font-size:24.5px;line-height:27.371px;color:#222;white-space:nowrap;letter-spacing:0.111px;-webkit-text-stroke:0.3px #222;">News/Press Releases</span><span style="position:absolute;left:1628.80px;top:1484.88px;font-size:28.3px;line-height:31.616px;color:#3b3b3b;white-space:nowrap;letter-spacing:-0.520px;-webkit-text-stroke:0.3px #3b3b3b;">Unread</span><span style="position:absolute;left:1783.50px;top:1487.10px;font-size:25.3px;line-height:28.265px;color:#3b3b3b;white-space:nowrap;letter-spacing:-1.800px;-webkit-text-stroke:0.3px #3b3b3b;">ECB</span><span style="position:absolute;left:2255.40px;top:1486.67px;font-size:25px;line-height:27.930px;color:#3b3b3b;white-space:nowrap;letter-spacing:-0.444px;-webkit-text-stroke:0.3px #3b3b3b;">Unassigned</span><span style="position:absolute;left:2471.30px;top:1473.02px;font-size:20.3px;line-height:22.679px;color:#474747;white-space:nowrap;letter-spacing:0.250px;-webkit-text-stroke:0.3px #474747;">Published</span><span style="position:absolute;left:2577.80px;top:1464.69px;font-size:29.5px;line-height:32.957px;color:#3b3b3b;white-space:nowrap;letter-spacing:0.556px;-webkit-text-stroke:0.3px #3b3b3b;">02/28/2025</span><span style="position:absolute;left:2471.30px;top:1512.42px;font-size:20.3px;line-height:22.679px;color:#474747;white-space:nowrap;letter-spacing:-0.133px;-webkit-text-stroke:0.3px #474747;">Created</span><span style="position:absolute;left:2577.80px;top:1504.09px;font-size:29.5px;line-height:32.957px;color:#3b3b3b;white-space:nowrap;letter-spacing:0.556px;-webkit-text-stroke:0.3px #3b3b3b;">03/01/2025</span></div>
<div style="position:absolute;left:0;top:0;width:2752px;height:1596px;z-index:9"><span style="position:absolute;left:182.00px;top:36.71px;font-size:32.8px;line-height:36.644px;color:#222;white-space:nowrap;letter-spacing:0.600px;-webkit-text-stroke:0.3px #222;">Alerts</span><span style="position:absolute;left:1969.60px;top:39.90px;font-size:27.5px;line-height:30.723px;color:#959595;white-space:nowrap;letter-spacing:0.400px;-webkit-text-stroke:0.3px #959595;">Search</span><span style="position:absolute;left:2593.40px;top:25.32px;font-size:16px;line-height:17.875px;color:#fff;white-space:nowrap;letter-spacing:-1.000px;-webkit-text-stroke:0.5px #fff;">9+</span><span style="position:absolute;left:2671.50px;top:39.26px;font-size:26px;line-height:29.047px;color:#2633d6;white-space:nowrap;letter-spacing:-3.000px;-webkit-text-stroke:1.0px #2633d6;">PB</span><span style="position:absolute;left:183.00px;top:150.87px;font-size:29.2px;line-height:32.622px;color:#2633d6;white-space:nowrap;letter-spacing:0.467px;-webkit-text-stroke:1.1px #2633d6;">All Alerts</span><span style="position:absolute;left:433.20px;top:150.11px;font-size:28.6px;line-height:31.952px;color:#454545;white-space:nowrap;letter-spacing:-0.727px;-webkit-text-stroke:0.3px #454545;">By Relevance</span><span style="position:absolute;left:665.30px;top:150.11px;font-size:28.6px;line-height:31.952px;color:#454545;white-space:nowrap;letter-spacing:-0.294px;-webkit-text-stroke:0.3px #454545;">Regulatory Changes</span><span style="position:absolute;left:984.00px;top:150.11px;font-size:28.6px;line-height:31.952px;color:#454545;white-space:nowrap;letter-spacing:0.500px;-webkit-text-stroke:0.3px #454545;">Bills</span><span style="position:absolute;left:1103.60px;top:150.11px;font-size:28.6px;line-height:31.952px;color:#454545;white-space:nowrap;letter-spacing:-0.308px;-webkit-text-stroke:0.3px #454545;">Agency Updates</span><span style="position:absolute;left:1374.50px;top:150.11px;font-size:28.6px;line-height:31.952px;color:#454545;white-space:nowrap;letter-spacing:0.188px;-webkit-text-stroke:0.3px #454545;">Applicable Alerts</span><span style="position:absolute;left:1663.00px;top:151.31px;font-size:28.6px;line-height:31.952px;color:#222;white-space:nowrap;letter-spacing:0.100px;-webkit-text-stroke:0.3px #222;">Saved Views</span><span style="position:absolute;left:181.70px;top:245.88px;font-size:32.5px;line-height:36.309px;color:#222;white-space:nowrap;letter-spacing:-1.000px;-webkit-text-stroke:0.3px #222;">Group By</span><span style="position:absolute;left:322.00px;top:245.88px;font-size:32.5px;line-height:36.309px;color:#2633d6;white-space:nowrap;letter-spacing:0.267px;-webkit-text-stroke:0.3px #2633d6;">None</span><span style="position:absolute;left:2640.00px;top:249.68px;font-size:28.3px;line-height:31.616px;color:#5566d6;white-space:nowrap;letter-spacing:0.333px;-webkit-text-stroke:0.5px #5566d6;">Filters</span><span style="position:absolute;left:268.00px;top:363.01px;font-size:27.6px;line-height:30.834px;color:#666;white-space:nowrap;letter-spacing:1.800px;-webkit-text-stroke:1.0px #666;">Title</span><span style="position:absolute;left:1632.00px;top:341.71px;font-size:27.6px;line-height:30.834px;color:#666;white-space:nowrap;letter-spacing:0.714px;-webkit-text-stroke:1.0px #666;">Workflow</span><span style="position:absolute;left:1631.00px;top:381.71px;font-size:27.6px;line-height:30.834px;color:#666;white-space:nowrap;letter-spacing:0.400px;-webkit-text-stroke:1.0px #666;">Status</span><span style="position:absolute;left:1785.00px;top:361.71px;font-size:27.6px;line-height:30.834px;color:#666;white-space:nowrap;letter-spacing:0.080px;-webkit-text-stroke:1.0px #666;">Agency</span><span style="position:absolute;left:2231.40px;top:362.01px;font-size:27.6px;line-height:30.834px;color:#666;white-space:nowrap;-webkit-text-stroke:1.0px #666;">Owner</span><span style="position:absolute;left:2471.50px;top:362.01px;font-size:27.6px;line-height:30.834px;color:#666;white-space:nowrap;letter-spacing:0.100px;-webkit-text-stroke:1.0px #666;">Dates</span><span style="position:absolute;left:1240.00px;top:1530.20px;font-size:28.5px;line-height:31.840px;color:#333;white-space:nowrap;letter-spacing:0.071px;-webkit-text-stroke:0.3px #333;">Showing 1 - 50 of 3585 Alerts</span></div>
<div style="position:absolute;left:2670px;top:1490.6px;width:72px;height:72px;z-index:8;color:#fff;font-weight:700;font-size:46px;line-height:72px;text-align:center">?</div>
</body></html>
